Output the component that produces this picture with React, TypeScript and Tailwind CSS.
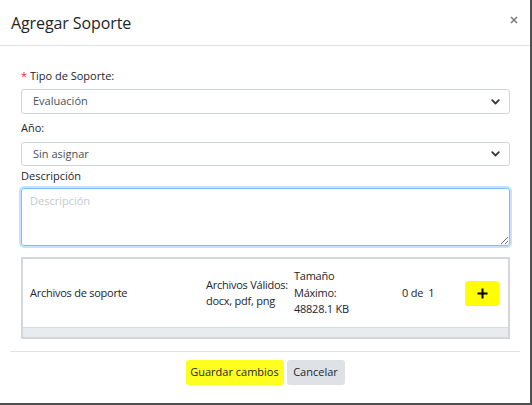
import React from "react";

const Chevron = () => (
  <svg width="9" height="6" viewBox="0 0 9 6" className="shrink-0">
    <path d="M1.2 1.2 L4.5 4.5 L7.8 1.2" fill="none" stroke="#343a40" strokeWidth="1.8" strokeLinecap="round" strokeLinejoin="round" />
  </svg>
);

const FakeSelect = ({ value, h }: { value: string; h: string }) => (
  <div className={`flex ${h} w-full items-center justify-between rounded-[3px] border border-[#ced4da] bg-white pl-[11px] pr-[9px] text-[11px] text-[#495057]`}>
    <span>{value}</span>
    <Chevron />
  </div>
);

export default function App() {
  return (
    <div
      className="flex h-[405px] w-[532px] flex-col border-b-2 border-r-2 border-[#505050] bg-white text-[#212529]"
      style={{ fontFamily: '"Open Sans", "Noto Sans", sans-serif' }}
    >
      <div className="flex h-[46px] shrink-0 items-center justify-between border-b border-[#dee2e6] pl-[11px] pr-[12px]">
        <span className="text-[16px] font-medium tracking-[-0.1px] text-[#212529]">Agregar Soporte</span>
        <svg width="8" height="8" viewBox="0 0 8 8" className="mt-[-5px]">
          <path d="M1 1 L7 7 M7 1 L1 7" stroke="#7a7a7a" strokeWidth="1.5" />
        </svg>
      </div>

      <div className="flex flex-col pl-[21px] pr-[20px] pt-[22px]">
        <div className="mb-[5px] h-[16px] text-[11px] leading-[16px]">
          <span className="text-[#e0262f]">*</span> Tipo de Soporte:
        </div>
        <FakeSelect value="Evaluación" h="h-[25px]" />
        <div className="mb-[6px] mt-[6px] h-[16px] text-[11px] leading-[16px]">Año:</div>
        <FakeSelect value="Sin asignar" h="h-[24px]" />
        <div className="mb-[4px] mt-[2px] h-[16px] text-[11px] leading-[16px]">Descripción</div>
        <textarea
          placeholder="Descripción"
          className="h-[58px] w-full rounded-[3px] border border-[#80bdff] px-[8px] py-[4px] text-[11px] leading-[16px] text-[#495057] shadow-[0_0_0_2px_rgba(0,123,255,0.22)] outline-none placeholder:text-[#c3c9d0]"
        />

        <div className="mt-[11px] flex h-[82px] flex-col border-2 border-[#d3d6da]">
          <div className="flex h-[68px] items-center text-[11px] leading-[16.5px] tracking-[-0.25px] text-[#212529]">
            <div className="w-[183px] pl-[7px]">Archivos de soporte</div>
            <div className="w-[86px] whitespace-nowrap">
              <div>Archivos Válidos:</div>
              <div>docx, pdf, png</div>
            </div>
            <div className="w-[110px] pl-[2px]">
              <div>Tamaño</div>
              <div>Máximo:</div>
              <div>48828.1 KB</div>
            </div>
            <div className="w-[63px] whitespace-pre">0 de  1</div>
            <div className="flex h-[25px] w-[34px] items-center justify-center rounded-[3px] bg-[#ffff00]">
              <svg width="11" height="11" viewBox="0 0 11 11">
                <path d="M5.5 0.5 V10.5 M0.5 5.5 H10.5" stroke="#000" strokeWidth="2" />
              </svg>
            </div>
          </div>
          <div className="flex-1 border-t border-[#d6d9dd] bg-[#e9ecef]" />
        </div>
      </div>

      <div className="mx-[10px] mt-[12px] flex justify-center gap-[3px] border-t border-[#dee2e6] pt-[8px]">
        <div className="flex h-[25px] w-[98px] items-center justify-center rounded-[3px] bg-[#ffff1f] text-[11px] text-[#212529]">
          Guardar cambios
        </div>
        <div className="flex h-[25px] w-[58px] items-center justify-center rounded-[3px] bg-[#dee2e6] text-[11px] text-[#212529]">
          Cancelar
        </div>
      </div>
    </div>
  );
}
